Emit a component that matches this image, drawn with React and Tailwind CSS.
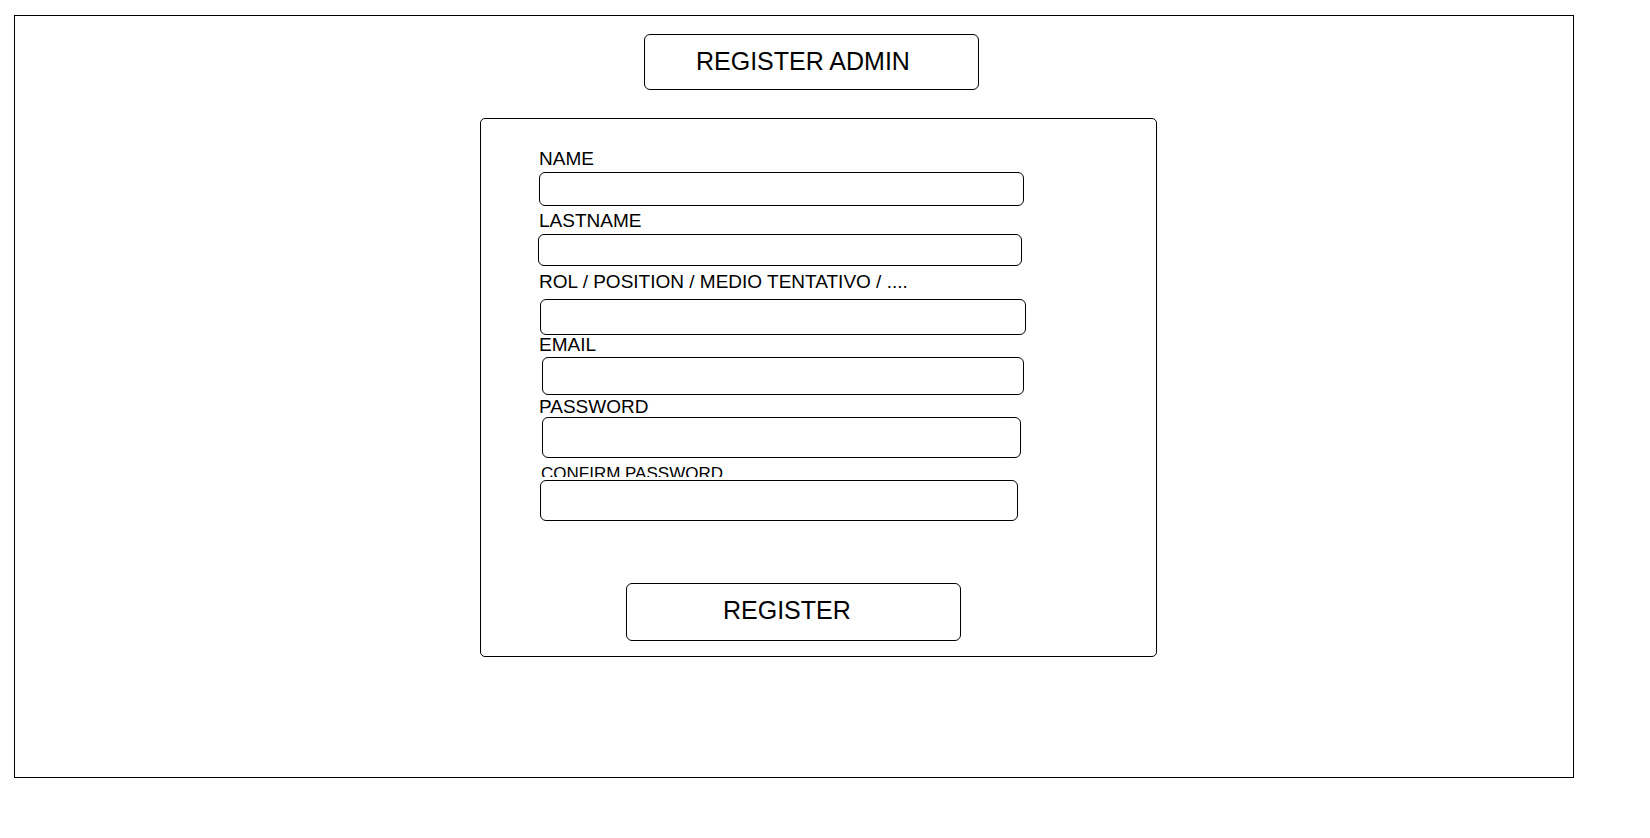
const fields = [
  { label: 'NAME', type: 'text', labelMt: 'mt-[30px]', inputMt: 'mt-[3px]', inputBox: 'ml-[1px] w-[485px] h-[34px]' },
  { label: 'LASTNAME', type: 'text', labelMt: 'mt-[5px]', inputMt: 'mt-[3px]', inputBox: 'ml-0 w-[484px] h-[32px]' },
  { label: 'ROL / POSITION / MEDIO TENTATIVO / ....', type: 'text', labelMt: 'mt-[6px]', inputMt: 'mt-[7px]', inputBox: 'ml-[2px] w-[486px] h-[36px]' },
  { label: 'EMAIL', type: 'email', labelMt: 'mt-0', inputMt: 'mt-[2px]', inputBox: 'ml-[4px] w-[482px] h-[38px]' },
  { label: 'PASSWORD', type: 'password', labelMt: 'mt-[2px]', inputMt: 'mt-0', inputBox: 'ml-[4px] w-[479px] h-[41px]' },
];

function Field({ label, type, labelMt, inputMt, inputBox }) {
  return (
    <div className="flex flex-col">
      <label className={`${labelMt} ml-[1px] text-[19px] leading-[20px] h-[20px] whitespace-nowrap`}>{label}</label>
      <input
        type={type}
        className={`${inputMt} ${inputBox} block border border-black rounded-[6px] bg-white outline-none`}
      />
    </div>
  );
}

export default function App() {
  return (
    <div className="bg-white w-[1650px] h-[838px] pt-[15px] pl-[14px] text-black font-['Liberation_Sans',Arial,sans-serif]">
      <div className="w-[1560px] h-[763px] border border-black flex flex-col items-start">
        <div className="ml-[629px] mt-[18px] w-[335px] h-[56px] border border-black rounded-[6px] flex items-center pl-[51px] pb-[2px] text-[25px] leading-none">
          REGISTER ADMIN
        </div>

        <form className="ml-[465px] mt-[28px] w-[677px] h-[539px] border border-black rounded-[5px] pl-[57px] flex flex-col items-start">
          {fields.map((f) => (
            <Field key={f.label} {...f} />
          ))}

          <div className="flex flex-col">
            <label className="mt-[6px] ml-[3px] text-[17px] leading-[19px] h-[13px] overflow-hidden whitespace-nowrap">
              CONFIRM PASSWORD
            </label>
            <input
              type="password"
              className="mt-[3px] ml-[2px] w-[478px] h-[41px] block border border-black rounded-[6px] bg-white outline-none"
            />
          </div>

          <button
            type="button"
            className="mt-[62px] ml-[88px] w-[335px] h-[58px] border border-black rounded-[6px] bg-white flex items-center pl-[96px] pb-[4px] text-[25px] leading-none"
          >
            REGISTER
          </button>
        </form>
      </div>
    </div>
  );
}
